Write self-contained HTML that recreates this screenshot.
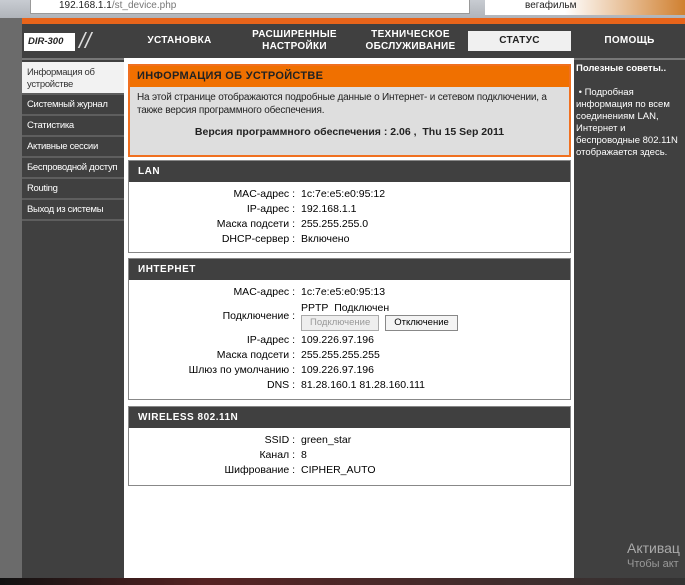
<!DOCTYPE html><html><head><meta charset="utf-8"><style>
*{margin:0;padding:0;box-sizing:border-box}
body{width:685px;height:585px;overflow:hidden;background:#6b6b6b;font-family:"Liberation Sans","DejaVu Sans",sans-serif;font-size:10.5px;position:relative}
.a{position:absolute}
.nav{position:absolute;top:24px;height:34px;background:#404040;color:#fff;font-weight:bold;font-size:10px;text-align:center;display:flex;align-items:center;justify-content:center;line-height:12px;letter-spacing:.3px}
.side div{height:21px;border-bottom:2px solid #5e5e5e;color:#fff;font-size:9.5px;padding:4px 0 0 5px;letter-spacing:-.3px}
.box{position:absolute;left:128px;width:443px;border:1px solid #888;background:#fff}
.hd{background:#404040;color:#fff;font-weight:bold;font-size:10px;height:21px;padding:5px 9px;letter-spacing:.5px}
.r{display:flex;height:15px;line-height:15px}
.r .l{width:172px;text-align:right;padding-right:6px}
.btn{display:inline-block;border:1px solid #aaa;padding:1px 8px;font-size:9.5px;line-height:12px;margin-right:6px}
</style></head><body>
<div class="a" style="left:0;top:0;width:685px;height:18px;background:linear-gradient(#c8ccd2,#b0b4ba)"></div>
<div class="a" style="left:30px;top:0;width:440px;height:14px;background:#fff;border:1px solid #999;border-top:0;font-size:10px;padding:0 0 0 28px;color:#222">192.168.1.1<span style="color:#777">/st_device.php</span></div>
<div class="a" style="left:485px;top:0;width:200px;height:15px;background:linear-gradient(90deg,#fff 40%,#d08030);font-size:10px;padding-left:40px;color:#222">вегафильм</div>
<div class="a" style="left:22px;top:18px;width:663px;height:6px;background:#e8641a"></div>
<div class="a" style="left:22px;top:24px;width:663px;height:554px;background:#404040"></div>
<div class="a" style="left:24px;top:33px;width:51px;height:18px;background:#fff;color:#222;font-weight:bold;font-style:italic;font-size:9.5px;padding:3px 0 0 4px">DIR-300</div>
<div class="a" style="left:79px;top:30px;color:#ddd;font-size:22px;font-style:italic;line-height:22px">//</div>
<div class="nav" style="left:126px;width:107px">УСТАНОВКА</div>
<div class="nav" style="left:235px;width:119px">РАСШИРЕННЫЕ<br>НАСТРОЙКИ</div>
<div class="nav" style="left:356px;width:109px">ТЕХНИЧЕСКОЕ<br>ОБСЛУЖИВАНИЕ</div>
<div class="nav" style="left:467px;width:105px"><div style="background:#f0f0f0;color:#222;width:103px;height:20px;line-height:20px">СТАТУС</div></div>
<div class="nav" style="left:574px;width:111px">ПОМОЩЬ</div>
<div class="a" style="left:22px;top:58px;width:663px;height:2px;background:#777"></div>
<div class="a side" style="left:22px;top:62px;width:102px">
<div style="height:33px;background:#f2f2f2;color:#333;padding-top:5px;line-height:12px">Информация об<br>устройстве</div>
<div>Системный журнал</div><div>Статистика</div><div>Активные сессии</div><div>Беспроводной доступ</div><div>Routing</div><div>Выход из системы</div></div>
<div class="a" style="left:124px;top:58px;width:450px;height:520px;background:#fff"></div>
<div class="a" style="left:576px;top:63px;width:108px;color:#fff;font-size:9.5px;line-height:12px"><b>Полезные советы..</b><br><br>&nbsp;• Подробная информация по всем соединениям LAN, Интернет и беспроводные 802.11N отображается здесь.</div>
<div class="box" style="top:64px;height:93px;border:2px solid #f07020;background:#dedede">
<div style="background:#f07000;color:#222;font-weight:bold;font-size:11px;height:21px;padding:4px 7px;letter-spacing:.3px">ИНФОРМАЦИЯ ОБ УСТРОЙСТВЕ</div>
<div style="padding:4px 7px;line-height:13px;color:#222;font-size:10px;letter-spacing:-.2px">На этой странице отображаются подробные данные о Интернет- и сетевом подключении, а также версия программного обеспечения.</div>
<div style="text-align:center;font-weight:bold;font-size:10.5px;margin-top:5px;color:#222">Версия программного обеспечения : 2.06 ,&nbsp; Thu 15 Sep 2011</div></div>
<div class="box" style="top:160px;height:93px"><div class="hd">LAN</div><div style="padding-top:5px">
<div class="r"><span class="l">MAC-адрес :</span>1c:7e:e5:e0:95:12</div>
<div class="r"><span class="l">IP-адрес :</span>192.168.1.1</div>
<div class="r"><span class="l">Маска подсети :</span>255.255.255.0</div>
<div class="r"><span class="l">DHCP-сервер :</span>Включено</div></div></div>
<div class="box" style="top:258px;height:142px"><div class="hd">ИНТЕРНЕТ</div><div style="padding-top:5px">
<div class="r"><span class="l">MAC-адрес :</span>1c:7e:e5:e0:95:13</div>
<div class="r" style="height:33px"><span class="l" style="line-height:33px">Подключение :</span><div style="line-height:14px;padding-top:1px">PPTP&nbsp; Подключен<br><span class="btn" style="background:#eee;color:#999">Подключение</span><span class="btn" style="background:#f4f4f4;border-color:#888">Отключение</span></div></div>
<div class="r"><span class="l">IP-адрес :</span>109.226.97.196</div>
<div class="r"><span class="l">Маска подсети :</span>255.255.255.255</div>
<div class="r"><span class="l">Шлюз по умолчанию :</span>109.226.97.196</div>
<div class="r"><span class="l">DNS :</span>81.28.160.1 81.28.160.111</div></div></div>
<div class="box" style="top:406px;height:80px"><div class="hd">WIRELESS 802.11N</div><div style="padding-top:5px">
<div class="r"><span class="l">SSID :</span>green_star</div>
<div class="r"><span class="l">Канал :</span>8</div>
<div class="r"><span class="l">Шифрование :</span>CIPHER_AUTO</div></div></div>
<div class="a" style="left:627px;top:540px;color:#aaa;font-size:14px">Активац</div>
<div class="a" style="left:627px;top:558px;color:#999;font-size:11px">Чтобы акт</div>
<div class="a" style="left:0;top:578px;width:685px;height:7px;background:linear-gradient(90deg,#111,#522 30%,#333)"></div>
</body></html>
